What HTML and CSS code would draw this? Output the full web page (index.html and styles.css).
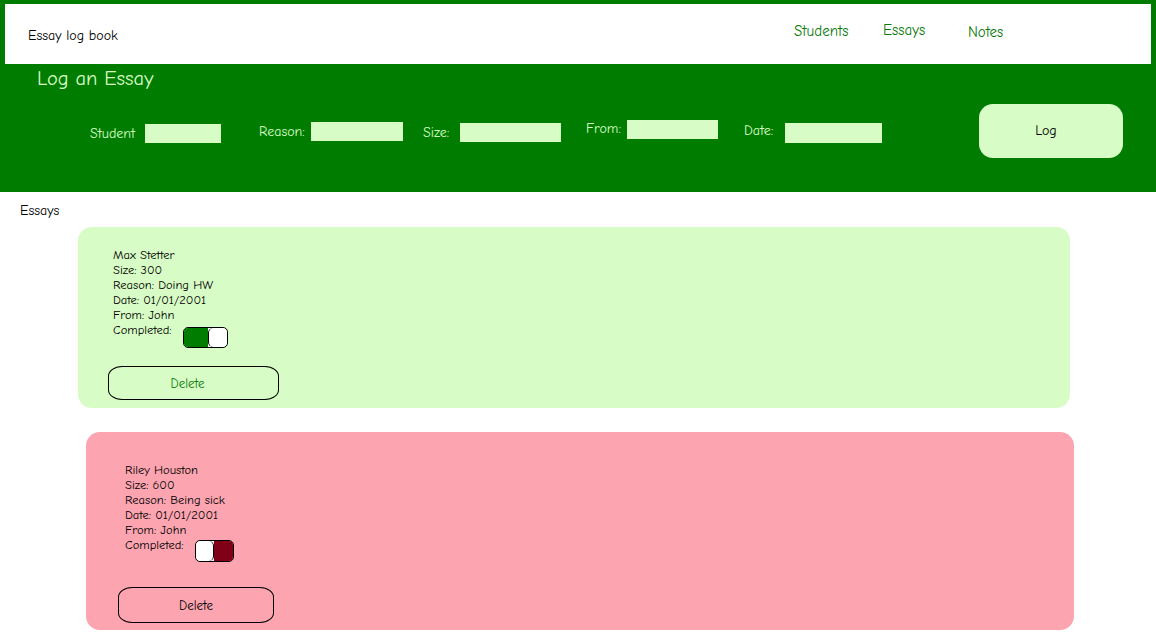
FILE: index.html
```html
<!DOCTYPE html>
<html lang="en">
<head>
<meta charset="utf-8">
<title>Essay log book</title>
<link rel="stylesheet" href="styles.css">
</head>
<body>
<header class="topbar">
  <div class="brand">Essay log book</div>
  <a class="nav-link nav-students" href="#">Students</a>
  <a class="nav-link nav-essays" href="#">Essays</a>
  <a class="nav-link nav-notes" href="#">Notes</a>
</header>

<section class="log-panel">
  <h1 class="log-title">Log an Essay</h1>
  <form class="log-form">
    <div class="field field-student">
      <label class="field-label lbl-student">Student</label>
      <input class="field-input in-student" type="text">
    </div>
    <div class="field field-reason">
      <label class="field-label lbl-reason">Reason:</label>
      <input class="field-input in-reason" type="text">
    </div>
    <div class="field field-size">
      <label class="field-label lbl-size">Size:</label>
      <input class="field-input in-size" type="text">
    </div>
    <div class="field field-from">
      <label class="field-label lbl-from">From:</label>
      <input class="field-input in-from" type="text">
    </div>
    <div class="field field-date">
      <label class="field-label lbl-date">Date:</label>
      <input class="field-input in-date" type="text">
    </div>
    <button class="log-btn" type="button">Log</button>
  </form>
</section>

<div class="section-label">Essays</div>

<article class="card card-done">
  <div class="line">Max Stetter</div>
  <div class="line">Size: 300</div>
  <div class="line">Reason: Doing HW</div>
  <div class="line">Date: 01/01/2001</div>
  <div class="line">From: John</div>
  <div class="line completed">
    <span class="completed-label">Completed:</span>
    <span class="toggle toggle-on"><span class="tg-a"></span><span class="tg-b"></span></span>
  </div>
  <button class="delete-btn" type="button">Delete</button>
</article>

<article class="card card-todo">
  <div class="line">Riley Houston</div>
  <div class="line">Size: 600</div>
  <div class="line">Reason: Being sick</div>
  <div class="line">Date: 01/01/2001</div>
  <div class="line">From: John</div>
  <div class="line completed">
    <span class="completed-label">Completed:</span>
    <span class="toggle toggle-off"><span class="tg-a"></span><span class="tg-b"></span></span>
  </div>
  <button class="delete-btn" type="button">Delete</button>
</article>
</body>
</html>
```

FILE: styles.css
```css
* { box-sizing: border-box; }

html, body {
  margin: 0;
  padding: 0;
  background: #ffffff;
}

body {
  font-family: "Comic Sans MS", "Comic Neue", "DejaVu Sans", sans-serif;
  color: #000000;
  width: 1156px;
  height: 641px;
  overflow: hidden;
}

/* ---------- top bar ---------- */
.topbar {
  height: 64px;
  border-top: 4px solid #007c00;
  border-left: 5px solid #007c00;
  border-right: 5px solid #007c00;
  background: #ffffff;
  display: grid;
  grid-template-columns: 766px 89px 85px auto;
  align-items: start;
  padding-left: 23px;
}

.brand {
  font-size: 14px;
  line-height: 16px;
  margin-top: 24px;
}

.nav-link {
  color: #0a7a0a;
  text-decoration: none;
  font-size: 15px;
  line-height: 18px;
}
.nav-students { margin-top: 18px; }
.nav-essays { margin-top: 17px; }
.nav-notes { margin-top: 19px; }

/* ---------- log panel ---------- */
.log-panel {
  height: 128px;
  background: #007c00;
  padding: 3px 0 0 37px;
}

.log-title {
  margin: 0;
  font-weight: normal;
  font-size: 20.5px;
  line-height: 24px;
  color: #d7fcc5;
}

.log-form {
  display: flex;
  align-items: flex-start;
  margin: 13px 0 0 53px;
  height: 54px;
}

.field {
  display: flex;
  align-items: center;
}
.field-student { width: 169px; margin-top: 20px; }
.field-reason  { width: 164px; margin-top: 18px; }
.field-size    { width: 163px; margin-top: 19px; }
.field-from    { width: 158px; margin-top: 16px; }
.field-date    { width: 235px; margin-top: 19px; }

.field-label {
  color: #d7fcc5;
  font-size: 14px;
  line-height: 16px;
  white-space: nowrap;
}
.lbl-student { width: 55px; }
.lbl-reason  { width: 52px; }
.lbl-size    { width: 37px; }
.lbl-from    { width: 41px; margin-top: -2px; }
.lbl-date    { width: 41px; margin-top: -4px; }

.field-input {
  height: 19px;
  border: none;
  padding: 0;
  margin: 0;
  background: #d7fcc5;
  outline: none;
}
.in-student { width: 76px; }
.in-reason  { width: 92px; }
.in-size    { width: 101px; }
.in-from    { width: 91px; }
.in-date    { width: 97px; height: 20px; }

.log-btn {
  width: 144px;
  height: 54px;
  border: none;
  border-radius: 14px;
  background: #d7fcc5;
  font-family: inherit;
  font-size: 14px;
  color: #000000;
  padding: 0 10px 2px 0;
  cursor: pointer;
}

/* ---------- essays ---------- */
.section-label {
  font-size: 14px;
  line-height: 16px;
  margin: 11px 0 0 20px;
}

.card {
  border-radius: 14px;
  font-size: 12.5px;
  line-height: 15px;
}

.card-done {
  background: #d7fcc5;
  width: 992px;
  height: 181px;
  margin: 8px 0 0 78px;
  padding: 21px 0 0 35px;
}

.card-todo {
  background: #fca5b1;
  width: 988px;
  height: 198px;
  margin: 24px 0 0 86px;
  padding: 31px 0 0 39px;
}

.line {
  height: 15px;
  white-space: nowrap;
}

.completed {
  display: flex;
  align-items: flex-start;
}

.completed-label {
  width: 70px;
}

.toggle {
  display: flex;
  flex: none;
  border: 1px solid #000000;
  border-radius: 5px;
  overflow: hidden;
  background: #ffffff;
}
.toggle-on { width: 45px; height: 21px; margin-top: 4px; }
.toggle-off { width: 39px; height: 22px; margin-top: 2px; }

.toggle-on .tg-a { width: 24px; background: #007c00; }
.toggle-on .tg-b { flex: 1; background: #ffffff; border-left: 1px solid #000000; border-radius: 5px; }
.toggle-off .tg-a { width: 18px; background: #ffffff; border-right: 1px solid #000000; border-radius: 5px; }
.toggle-off .tg-b { flex: 1; background: #800018; }

.delete-btn {
  display: block;
  border: 1px solid #000000;
  background: transparent;
  font-family: inherit;
  font-size: 13px;
  padding: 0;
  cursor: pointer;
}

.card-done .delete-btn {
  width: 171px;
  height: 34px;
  margin: 28px 0 0 -5px;
  padding-right: 12px;
  border-radius: 14px / 10px;
  color: #0a7a0a;
}

.card-todo .delete-btn {
  width: 156px;
  height: 36px;
  margin: 34px 0 0 -7px;
  border-radius: 14px / 10px;
  color: #000000;
}
```
